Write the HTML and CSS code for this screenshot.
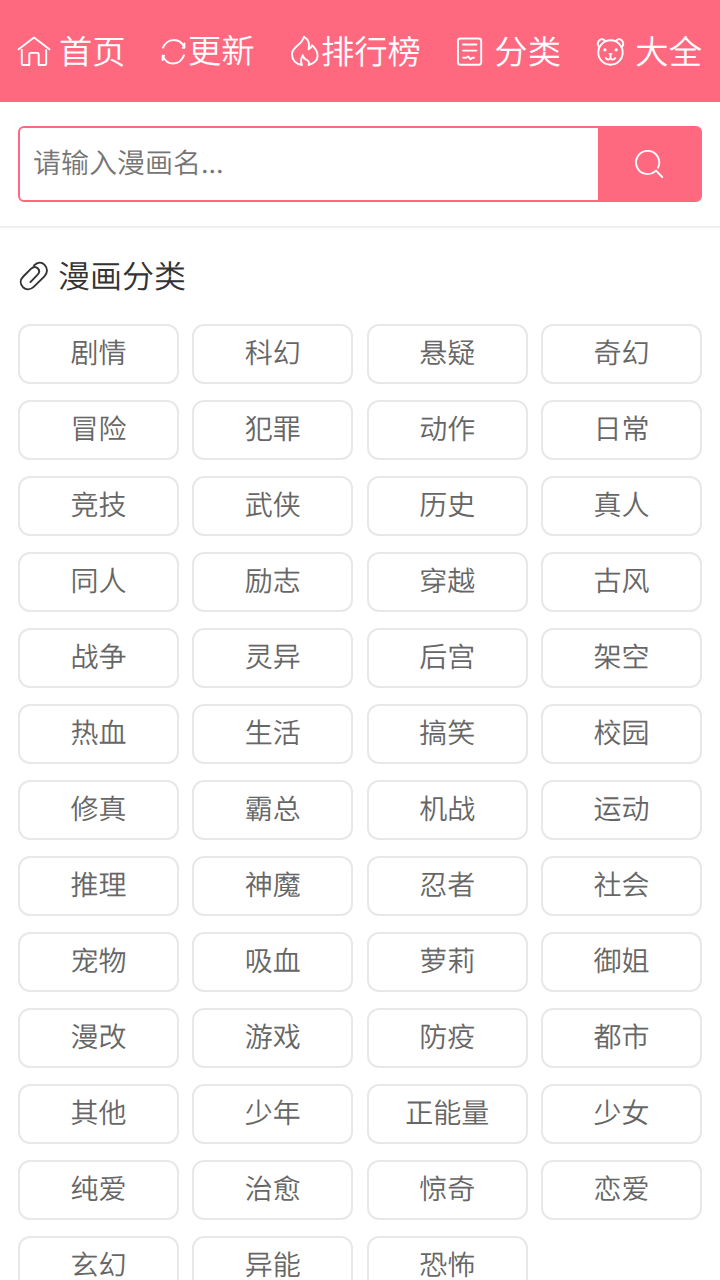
FILE: index.html
```
<!DOCTYPE html>
<html lang="zh-CN">
<head>
    <meta charset="UTF-8">
    <meta name="viewport" content="width=device-width, initial-scale=1.0">
    <title>漫画分类</title>
    <link rel="stylesheet" href="styles.css">
</head>
<body>
    <!-- 顶部导航 -->
    <nav class="nav">
        <a class="nav-item" href="#">
            <svg class="icon icon-home" viewBox="0 0 34 34"><path d="M1.6 15.3 17 3.5l15.400 11.800M4.800 16v13.700q0 1.300 1.300 1.300h6.200V20.200q0-1.300 1.300-1.300h6.800q1.300 0 1.300 1.300V31h6.200q1.300 0 1.300-1.300V16"/></svg>
            <span>首页</span>
        </a>
        <a class="nav-item nav-update" href="#">
            <svg class="icon icon-update" viewBox="0 0 26 34"><path d="M1.900 13.700C6.500 3.700 18.500 3.700 23 12.700M23.400 9.500v4.200h-1.600M23 21.300C18.500 32 6.500 32 1.900 22.300M1.600 26v-4.200h1.600"/></svg>
            <span>更新</span>
        </a>
        <a class="nav-item" href="#">
            <svg class="icon icon-rank" viewBox="0 0 30 34"><path d="M12 31C6 30.300 2 26 2 20.300 2 12.300 12 11.500 14 2.800c4.800 3 6 7 4.600 12.500 2-.9 3-2 3.400-4 7.500 6.800 8.500 16-3.400 19.700 1.200-3-.4-4.600-2.600-5.300-1.800-.8-2.600-2-3.200-4.500-1.700 2.800-2.600 6-.8 9.800z"/></svg>
            <span>排行榜</span>
        </a>
        <a class="nav-item" href="#">
            <svg class="icon icon-sort" viewBox="0 0 28 34"><rect x="2" y="4.500" width="23.200" height="26.300" rx="2.500"/><path d="M7 10.500h13.400M7 16.600h13.400M7.200 23.800h2.900l2.200-1.300 2 2.800 2-1.600h1.700"/></svg>
            <span>分类</span>
        </a>
        <a class="nav-item" href="#">
            <svg class="icon icon-all" viewBox="0 0 30 34"><circle cx="14.500" cy="18.500" r="12.200"/><path d="M3 13C-.7 7.500 5.800 2.300 9.400 7M19.600 7c3.600-4.700 10.100.5 6.400 6M14.500 20.500v3.300M9.800 24c1.300 2.300 3.900 2 4.700-.2.8 2.200 3.400 2.500 4.700.2"/><g class="dot"><circle cx="8.900" cy="15.800" r="1.600"/><circle cx="20.100" cy="15.800" r="1.600"/><path d="M12.200 19.300h4.600l-2.300 2.700z"/></g></svg>
            <span>大全</span>
        </a>
    </nav>

    <!-- 搜索框 -->
    <div class="search">
        <form class="search-form">
            <input class="search-input" type="text" placeholder="请输入漫画名...">
            <button class="search-btn" type="button" aria-label="搜索">
                <svg class="icon icon-search" viewBox="0 0 32 32"><path d="M25 19.700A11.600 11.600 0 1 0 22.300 23.200M23 22.600l6.200 6.400"/></svg>
            </button>
        </form>
    </div>

    <!-- 漫画分类 -->
    <div class="category">
        <h2 class="title">
            <svg class="icon icon-clip" viewBox="0 0 32 32"><path d="M16 5.400C19.600 2 23.800 2 26.600 4.800c3.200 3.300 3.200 8.200-.2 11.600L16 26.600C12.400 30 8 30 5 27.200 1.800 24 2 19.800 5.300 16.500l7.600-7.600c2.400-2.400 5.200-2.200 7-.4 1.700 1.800 1.700 4.200-.5 6.400l-7 7.200"/></svg>
            <span>漫画分类</span>
        </h2>
        <div class="tags">
            <a href="#">剧情</a>
            <a href="#">科幻</a>
            <a href="#">悬疑</a>
            <a href="#">奇幻</a>
            <a href="#">冒险</a>
            <a href="#">犯罪</a>
            <a href="#">动作</a>
            <a href="#">日常</a>
            <a href="#">竞技</a>
            <a href="#">武侠</a>
            <a href="#">历史</a>
            <a href="#">真人</a>
            <a href="#">同人</a>
            <a href="#">励志</a>
            <a href="#">穿越</a>
            <a href="#">古风</a>
            <a href="#">战争</a>
            <a href="#">灵异</a>
            <a href="#">后宫</a>
            <a href="#">架空</a>
            <a href="#">热血</a>
            <a href="#">生活</a>
            <a href="#">搞笑</a>
            <a href="#">校园</a>
            <a href="#">修真</a>
            <a href="#">霸总</a>
            <a href="#">机战</a>
            <a href="#">运动</a>
            <a href="#">推理</a>
            <a href="#">神魔</a>
            <a href="#">忍者</a>
            <a href="#">社会</a>
            <a href="#">宠物</a>
            <a href="#">吸血</a>
            <a href="#">萝莉</a>
            <a href="#">御姐</a>
            <a href="#">漫改</a>
            <a href="#">游戏</a>
            <a href="#">防疫</a>
            <a href="#">都市</a>
            <a href="#">其他</a>
            <a href="#">少年</a>
            <a href="#">正能量</a>
            <a href="#">少女</a>
            <a href="#">纯爱</a>
            <a href="#">治愈</a>
            <a href="#">惊奇</a>
            <a href="#">恋爱</a>
            <a href="#">玄幻</a>
            <a href="#">异能</a>
            <a href="#">恐怖</a>
        </div>
    </div>
</body>
</html>
```
FILE: styles.css
```
* {
    box-sizing: border-box;
}

body {
    margin: 0;
    background-color: #fff;
    font-family: "Noto Sans CJK SC", sans-serif;
    font-weight: 350;
    text-rendering: geometricPrecision;
}

/* 隐藏滚动条 */
body::-webkit-scrollbar {
    display: none;
}

a {
    text-decoration: none;
}

.icon {
    display: block;
    flex: none;
    fill: none;
    stroke: currentColor;
    stroke-width: 1.9;
    stroke-linecap: round;
    stroke-linejoin: round;
}

/* 顶部导航 */
.nav {
    display: flex;
    justify-content: space-between;
    height: 102px;
    padding: 0 18px 0 17px;
    background-color: #ff6980;
}

.nav-item {
    display: flex;
    align-items: center;
    color: #fff;
    font-size: 33.3px;
    line-height: 40px;
    white-space: nowrap;
}

.nav-item span {
    padding-bottom: 2px;
}

.nav-item.nav-update span {
    padding-bottom: 5px;
}

.icon-home {
    width: 34px;
    height: 34px;
    margin-right: 8px;
}

.icon-update {
    width: 26px;
    height: 34px;
    margin-right: 1px;
}

.icon-rank {
    width: 30px;
    height: 34px;
    margin-right: 1px;
}

.icon-sort {
    width: 28px;
    height: 34px;
    margin-right: 10px;
}

.icon-all {
    width: 30px;
    height: 34px;
    margin-right: 9px;
}

.dot {
    fill: currentColor;
    stroke: none;
}

/* 搜索框 */
.search {
    height: 126px;
    padding: 24px 18px;
    border-bottom: 2px solid #f0f0f0;
}

.search-form {
    display: flex;
    height: 76px;
    border: 2px solid #ff6980;
    border-radius: 6px;
    background-color: #ff6980;
}

.search-input {
    flex: 1;
    min-width: 0;
    padding: 0 13px 4px;
    border: none;
    border-radius: 4px 0 0 4px;
    outline: none;
    background-color: #fff;
    color: #333;
    font-family: inherit;
    font-size: 28px;
    font-weight: inherit;
    text-rendering: inherit;
}

.search-input::placeholder {
    color: #757575;
}

.search-btn {
    display: flex;
    align-items: center;
    justify-content: center;
    width: 102px;
    padding: 0;
    border: none;
    background: none;
    color: #fff;
    cursor: pointer;
}

.icon-search {
    width: 32px;
    height: 32px;
}

/* 分类列表 */
.category {
    padding: 0 18px;
}

.title {
    display: flex;
    align-items: center;
    height: 96px;
    margin: 0;
    color: #333;
    font-size: 32px;
    font-weight: inherit;
}

.title span {
    padding-bottom: 3px;
}

.icon-clip {
    width: 32px;
    height: 32px;
    margin-right: 8px;
}

.tags {
    display: grid;
    grid-template-columns: repeat(4, 1fr);
    gap: 16px 13.6px;
}

.tags a {
    height: 60px;
    border: 2px solid #e8e8e8;
    border-radius: 12px;
    color: #666;
    font-size: 28px;
    line-height: 52px;
    text-align: center;
}
```
